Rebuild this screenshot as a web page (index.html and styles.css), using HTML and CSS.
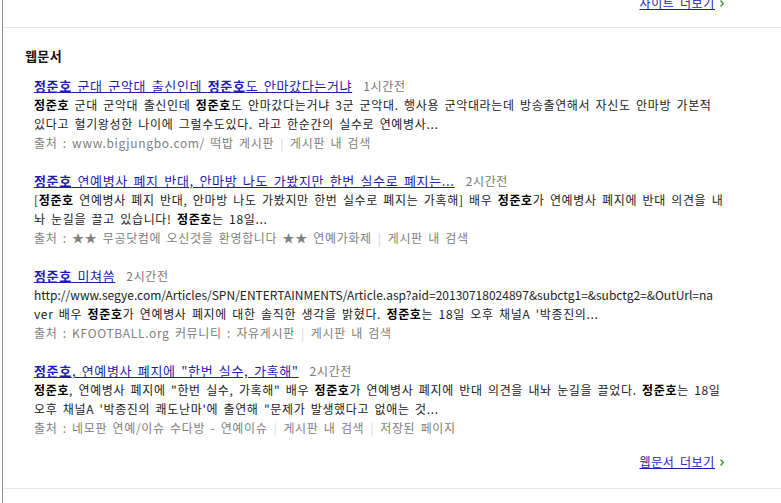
FILE: index.html
```html
<html>
<head>
<meta charset="utf-8">
<link rel="stylesheet" href="styles.css">
</head>
<body>

<div id="wrap">
	<div class="more more-top">
		<a href="#">사이트 더보기</a><svg class="arrow" width="4" height="7" viewBox="0 0 4 7"><path d="M0.5 0.5 L3.2 3.5 L0.5 6.5" fill="none" stroke="#3f9c3f" stroke-width="1.4"/></svg>
	</div>

	<div id="webdoc" class="section">
		<h2>웹문서</h2>
		<ul class="results">
			<li>
				<div class="title"><a href="#"><b>정준호</b> 군대 군악대 출신인데 <b>정준호</b>도 안마갔다는거냐</a><span class="time">1시간전</span></div>
				<div class="desc"><b>정준호</b> 군대 군악대 출신인데 <b>정준호</b>도 안마갔다는거냐 3군 군악대. 행사용 군악대라는데 방송출연해서 자신도 안마방 가본적<br>있다고 혈기왕성한 나이에 그럴수도있다. 라고 한순간의 실수로 연예병사...</div>
				<div class="source">출처 : www.bigjungbo.com/ 떡밥 게시판<span class="bar">|</span>게시판 내 검색</div>
			</li>
			<li>
				<div class="title"><a href="#"><b>정준호</b> 연예병사 폐지 반대, 안마방 나도 가봤지만 한번 실수로 폐지는...</a><span class="time">2시간전</span></div>
				<div class="desc">[<b>정준호</b> 연예병사 폐지 반대, 안마방 나도 가봤지만 한번 실수로 폐지는 가혹해] 배우 <b>정준호</b>가 연예병사 폐지에 반대 의견을 내<br>놔 눈길을 끌고 있습니다! <b>정준호</b>는 18일...</div>
				<div class="source">출처 : ★★ 무공닷컴에 오신것을 환영합니다 ★★ 연예가화제<span class="bar">|</span>게시판 내 검색</div>
			</li>
			<li>
				<div class="title"><a href="#"><b>정준호</b> 미쳐씀</a><span class="time">2시간전</span></div>
				<div class="desc"><span class="url">http://www.segye.com/Articles/SPN/ENTERTAINMENTS/Article.asp?aid=20130718024897&amp;subctg1=&amp;subctg2=&amp;OutUrl=na</span><br>ver 배우 <b>정준호</b>가 연예병사 폐지에 대한 솔직한 생각을 밝혔다. <b>정준호</b>는 18일 오후 채널A '박종진의...</div>
				<div class="source">출처 : KFOOTBALL.org 커뮤니티 : 자유게시판<span class="bar">|</span>게시판 내 검색</div>
			</li>
			<li>
				<div class="title"><a href="#"><b>정준호</b>, 연예병사 폐지에 "한번 실수, 가혹해"</a><span class="time">2시간전</span></div>
				<div class="desc"><b>정준호</b>, 연예병사 폐지에 "한번 실수, 가혹해" 배우 <b>정준호</b>가 연예병사 폐지에 반대 의견을 내놔 눈길을 끌었다. <b>정준호</b>는 18일<br>오후 채널A '박종진의 쾌도난마'에 출연해 "문제가 발생했다고 없애는 것...</div>
				<div class="source">출처 : 네모판 연예/이슈 수다방 - 연예이슈<span class="bar">|</span>게시판 내 검색<span class="bar">|</span>저장된 페이지</div>
			</li>
		</ul>
		<div class="more">
			<a href="#">웹문서 더보기</a><svg class="arrow" width="4" height="7" viewBox="0 0 4 7"><path d="M0.5 0.5 L3.2 3.5 L0.5 6.5" fill="none" stroke="#3f9c3f" stroke-width="1.4"/></svg>
		</div>
	</div>
</div>

</body>
</html>
```

FILE: styles.css
```css
body {
	margin: 0;
	padding: 0;
	background: #fff;
	font-family: "Noto Sans CJK KR", "DejaVu Sans", sans-serif;
	font-size: 12px;
	letter-spacing: 0.055em;
	word-spacing: 2px;
	color: #333;
}

#wrap {
	margin-left: 2px;
	border-left: 1px solid #8c8c8c;
	height: 503px;
	overflow: hidden;
}

a {
	color: #1c1cb0;
}

.more {
	text-align: right;
	line-height: 19px;
	padding-right: 57px;
}

.more .arrow {
	margin-left: 5px;
	vertical-align: 1px;
}

.more-top {
	margin-top: -7px;
	height: 34px;
}

.section {
	border-top: 1px solid #e6e6e6;
	border-bottom: 1px solid #e6e6e6;
	padding: 18px 0 17px 0;
	margin-left: 1px;
}

.section h2 {
	margin: 0 0 10px 21px;
	font-size: 13px;
	line-height: 20px;
	letter-spacing: 0.03em;
	color: #111;
}

.results {
	margin: 0 0 15px 0;
	padding: 0 0 0 30px;
	list-style: none;
}

.results li {
	margin-bottom: 19px;
	line-height: 19px;
}

.results li:last-child {
	margin-bottom: 0;
}

.title {
	font-size: 13px;
}

.time {
	color: #777;
	font-size: 12px;
	margin-left: 11px;
}

.desc {
	white-space: nowrap;
	color: #222;
}

.desc b {
	color: #000;
}

.desc .url {
	letter-spacing: 0;
	word-spacing: 0;
}

.source {
	color: #808080;
}

.source .bar {
	color: #d6d6d6;
	margin: 0 6px;
}
```
